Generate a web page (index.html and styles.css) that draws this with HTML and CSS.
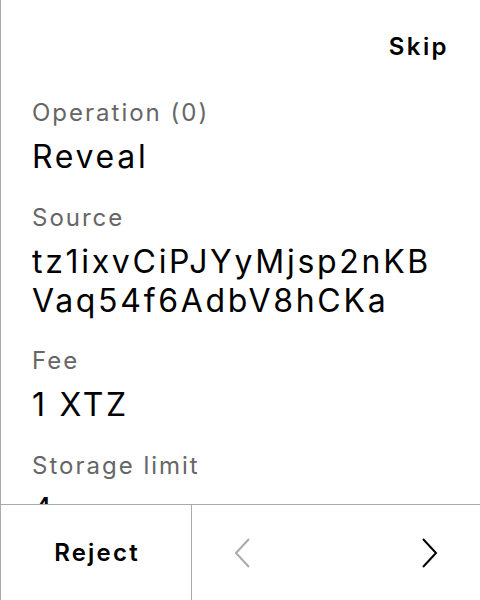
FILE: index.html
```html
<!DOCTYPE html>
<html>
<head>
<meta charset="utf-8">
<link rel="stylesheet" href="styles.css">
</head>
<body>
<div class="screen">
  <main class="main">
    <div class="header"><span class="skip">Skip</span></div>
    <div class="fields">
      <div class="field">
        <div class="label">Operation (0)</div>
        <div class="value">Reveal</div>
      </div>
      <div class="field">
        <div class="label">Source</div>
        <div class="value addr">tz1ixvCiPJYyMjsp2nKBVaq54f6AdbV8hCKa</div>
      </div>
      <div class="field">
        <div class="label">Fee</div>
        <div class="value">1 XTZ</div>
      </div>
      <div class="field">
        <div class="label">Storage limit</div>
        <div class="value">4</div>
      </div>
    </div>
  </main>
  <footer class="footer">
    <div class="reject">Reject</div>
    <div class="nav">
      <svg class="chev prev" width="16" height="30" viewBox="0 0 16 30"><path d="M15 1 L2 15 L15 29" fill="none" stroke="currentColor" stroke-width="2"/></svg>
      <svg class="chev next" width="16" height="30" viewBox="0 0 16 30"><path d="M1 1 L14 15 L1 29" fill="none" stroke="currentColor" stroke-width="2"/></svg>
    </div>
  </footer>
</div>
</body>
</html>
```
FILE: styles.css
```css
html, body {
  margin: 0;
  padding: 0;
  background: #fff;
}
body {
  font-family: Inter, "Noto Sans", sans-serif;
  color: #000;
}
.screen {
  width: 480px;
  height: 600px;
  box-sizing: border-box;
  border-left: 1px solid #aaaaaa;
  display: flex;
  flex-direction: column;
}
.main {
  height: 504px;
  overflow: hidden;
  flex: none;
}
.header {
  display: flex;
  justify-content: flex-end;
  padding: 31px 31px 0 0;
}
.skip {
  font-size: 24px;
  line-height: 32px;
  font-weight: 600;
  letter-spacing: 2.4px;
}
.fields {
  padding: 34px 32px 0 31px;
  display: flex;
  flex-direction: column;
  gap: 25.5px;
}
.label {
  font-size: 24px;
  line-height: 32px;
  color: #666666;
  margin-bottom: 8px;
  letter-spacing: 2px;
}
.value {
  font-size: 32px;
  line-height: 39px;
  letter-spacing: 2.7px;
}
.addr {
  overflow-wrap: anywhere;
}
.footer {
  height: 96px;
  box-sizing: border-box;
  border-top: 1px solid #aaaaaa;
  display: flex;
  flex: none;
}
.reject {
  width: 191px;
  border-right: 1px solid #aaaaaa;
  display: flex;
  align-items: center;
  justify-content: center;
  font-size: 24px;
  font-weight: 600;
  letter-spacing: 2.2px;
  padding-left: 2px;
  box-sizing: border-box;
}
.nav {
  flex: 1;
  display: flex;
  align-items: center;
  justify-content: space-between;
  padding: 0 42px 0 42px;
}
.prev { color: #aaaaaa; }
.next { color: #000; }
```
